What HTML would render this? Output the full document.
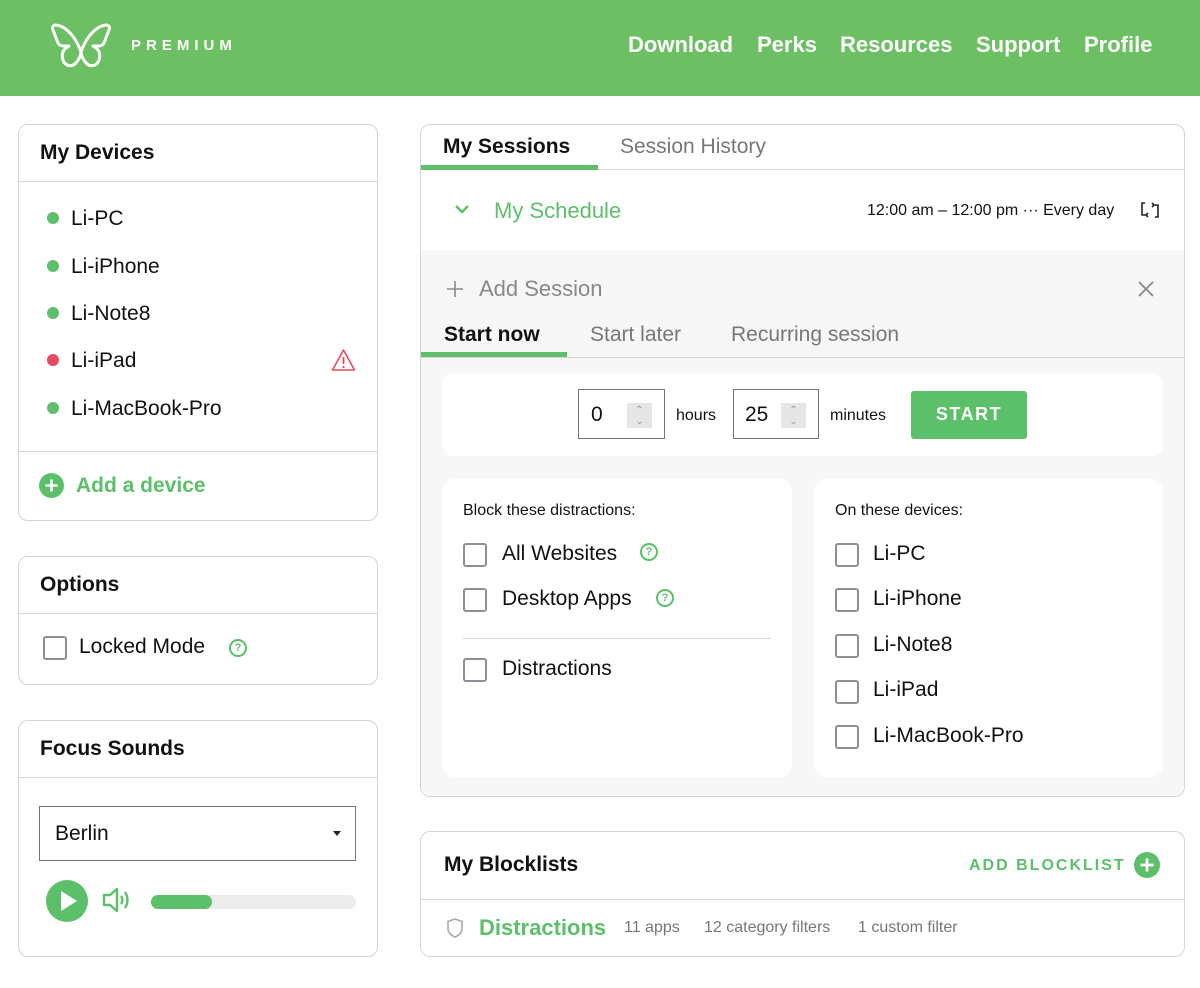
<!DOCTYPE html>
<html><head><meta charset="utf-8"><style>
*{box-sizing:border-box;margin:0;padding:0}
body{width:1200px;height:988px;background:#fff;font-family:"Liberation Sans",Arial,sans-serif;position:relative;overflow:hidden;color:#111}
.a{position:absolute}
.hdr{left:0;top:0;width:1200px;height:96px;background:#6cc063}
.nav{top:32px;color:#fff;font-weight:bold;font-size:22px}
.card{border:1px solid #d4d4d4;border-radius:10px;background:#fff}
.title{font-weight:bold;font-size:21px}
.line{height:1px;background:#d6d6d6}
.dot{width:12px;height:12px;border-radius:50%;background:#5cbf69}
.dev{font-size:21px}
.cb{width:24px;height:24px;border:2px solid #8e8e96;border-radius:3px;background:#fff}
.q{width:18px;height:18px;border:2px solid #5cbf69;border-radius:50%;color:#5cbf69;font-size:11px;font-weight:bold;text-align:center;line-height:14px}
.g{color:#5cbf69}
.gr{color:#777}
</style></head><body>
<div class="a hdr"></div>
<svg class="a" style="left:51px;top:22px" width="60" height="48" viewBox="0 0 60 48"><path d="M30 30 C25 15 15 4 5 3 C2 3 1 5 2 8 L7 21 C8 23 10 24 13 24 L18 24 C12 27 10 32 12 38 C14 44 20 45 24 42 C28 38 30 33 30 30 C30 33 32 38 36 42 C40 45 46 44 48 38 C50 32 48 27 42 24 L47 24 C50 24 52 23 53 21 L58 8 C59 5 58 3 55 3 C45 4 35 15 30 30 Z" fill="none" stroke="#fff" stroke-width="3" stroke-linejoin="round"/></svg>
<div class="a" style="left:131px;top:37px;color:#fff;font-weight:bold;font-size:15px;letter-spacing:5px">PREMIUM</div>
<div class="a nav" style="left:628px">Download</div>
<div class="a nav" style="left:757px">Perks</div>
<div class="a nav" style="left:840px">Resources</div>
<div class="a nav" style="left:976px">Support</div>
<div class="a nav" style="left:1084px">Profile</div>

<!-- Devices -->
<div class="a card" style="left:18px;top:124px;width:360px;height:397px"></div>
<div class="a title" style="left:40px;top:141px">My Devices</div>
<div class="a line" style="left:19px;top:181px;width:358px"></div>
<div class="a dot" style="left:47px;top:212px"></div><div class="a dev" style="left:71px;top:207px">Li-PC</div>
<div class="a dot" style="left:47px;top:260px"></div><div class="a dev" style="left:71px;top:255px">Li-iPhone</div>
<div class="a dot" style="left:47px;top:307px"></div><div class="a dev" style="left:71px;top:302px">Li-Note8</div>
<div class="a dot" style="left:47px;top:354px;background:#e84a5f"></div><div class="a dev" style="left:71px;top:349px">Li-iPad</div>
<svg class="a" style="left:331px;top:348px" width="25" height="24" viewBox="0 0 25 24"><path d="M12.5 2 L23.5 22 H1.5 Z" fill="none" stroke="#e84a5f" stroke-width="1.6" stroke-linejoin="round"/><path d="M12.5 9 V16" stroke="#e84a5f" stroke-width="1.8"/><circle cx="12.5" cy="19" r="1.1" fill="#e84a5f"/></svg>
<div class="a dot" style="left:47px;top:402px"></div><div class="a dev" style="left:71px;top:397px">Li-MacBook-Pro</div>
<div class="a line" style="left:19px;top:451px;width:358px"></div>
<svg class="a" style="left:39px;top:473px" width="25" height="25"><circle cx="12.5" cy="12.5" r="12.5" fill="#5cbf69"/><path d="M12.5 6.5V18.5M6.5 12.5H18.5" stroke="#fff" stroke-width="2.6"/></svg>
<div class="a g" style="left:76px;top:474px;font-size:21px;font-weight:bold">Add a device</div>

<!-- Options -->
<div class="a card" style="left:18px;top:556px;width:360px;height:129px"></div>
<div class="a title" style="left:40px;top:573px">Options</div>
<div class="a line" style="left:19px;top:613px;width:358px"></div>
<div class="a cb" style="left:43px;top:636px"></div>
<div class="a dev" style="left:79px;top:635px">Locked Mode</div>
<div class="a q" style="left:229px;top:639px">?</div>

<!-- Focus Sounds -->
<div class="a card" style="left:18px;top:720px;width:360px;height:237px"></div>
<div class="a title" style="left:40px;top:737px">Focus Sounds</div>
<div class="a line" style="left:19px;top:777px;width:358px"></div>
<div class="a" style="left:39px;top:806px;width:317px;height:55px;border:1.5px solid #777"></div>
<div class="a dev" style="left:55px;top:822px">Berlin</div>
<div class="a" style="left:333px;top:831px;border-left:4px solid transparent;border-right:4px solid transparent;border-top:5px solid #222"></div>
<svg class="a" style="left:46px;top:880px" width="42" height="42"><circle cx="21" cy="21" r="21" fill="#5cbf69"/><path d="M15 11 L31 21 L15 31 Z" fill="#fff"/></svg>
<svg class="a" style="left:102px;top:887px" width="30" height="26" viewBox="0 0 30 26"><path d="M2 8 H8 L15 2 V24 L8 18 H2 Z" fill="none" stroke="#5cbf69" stroke-width="2.4" stroke-linejoin="round"/><path d="M19 9 Q22 13 19 17" fill="none" stroke="#5cbf69" stroke-width="2.4"/><path d="M23 5 Q28 13 23 21" fill="none" stroke="#5cbf69" stroke-width="2.4"/></svg>
<div class="a" style="left:151px;top:895px;width:205px;height:14px;border-radius:7px;background:#ececec"></div>
<div class="a" style="left:151px;top:895px;width:61px;height:14px;border-radius:7px;background:#5cbf69"></div>

<!-- Sessions -->
<div class="a card" style="left:420px;top:124px;width:765px;height:673px;overflow:hidden"><div class="a" style="left:0;top:125px;width:765px;height:548px;background:#f7f7f7"></div></div>
<div class="a title" style="left:443px;top:135px">My Sessions</div>
<div class="a" style="left:620px;top:135px;font-size:21px;color:#777">Session History</div>
<div class="a line" style="left:421px;top:169px;width:763px"></div>
<div class="a" style="left:421px;top:165px;width:177px;height:5px;background:#5cbf69"></div>
<svg class="a" style="left:454px;top:203px" width="16" height="12"><path d="M2 3 L8 9 L14 3" fill="none" stroke="#5cbf69" stroke-width="2.4"/></svg>
<div class="a g" style="left:494px;top:198px;font-size:22px">My Schedule</div>
<div class="a" style="left:867px;top:202px;font-size:16px">12:00 am – 12:00 pm ··· Every day</div>
<svg class="a" style="left:1140px;top:201px" width="20" height="18" viewBox="0 0 20 18"><path d="M5 2 H2 V14 H7 M8 12 L6 14 L8 16" fill="none" stroke="#222" stroke-width="1.6"/><path d="M15 16 H18 V4 H13 M12 2 L14 4 L12 6" fill="none" stroke="#222" stroke-width="1.6"/></svg>
<svg class="a" style="left:446px;top:280px" width="18" height="18"><path d="M9 1V17M1 9H17" stroke="#888" stroke-width="1.6"/></svg>
<div class="a" style="left:479px;top:276px;font-size:22px;color:#888">Add Session</div>
<svg class="a" style="left:1137px;top:280px" width="18" height="18"><path d="M2 2L16 16M16 2L2 16" stroke="#888" stroke-width="1.8"/></svg>
<div class="a title" style="left:444px;top:323px">Start now</div>
<div class="a" style="left:590px;top:323px;font-size:21px;color:#777">Start later</div>
<div class="a" style="left:731px;top:323px;font-size:21px;color:#777">Recurring session</div>
<div class="a line" style="left:421px;top:357px;width:763px"></div>
<div class="a" style="left:421px;top:352px;width:146px;height:5px;background:#5cbf69"></div>

<div class="a" style="left:442px;top:373px;width:721px;height:83px;background:#fff;border-radius:12px"></div>
<div class="a" style="left:578px;top:389px;width:87px;height:50px;border:1.5px solid #777"></div>
<div class="a dev" style="left:591px;top:403px">0</div>
<div class="a" style="left:627px;top:403px;width:25px;height:25px;background:#e6e6e6;color:#999;font-size:10px;line-height:11px;text-align:center;padding-top:2px">⌃<br>⌄</div>
<div class="a" style="left:676px;top:407px;font-size:16px">hours</div>
<div class="a" style="left:733px;top:389px;width:86px;height:50px;border:1.5px solid #777"></div>
<div class="a dev" style="left:745px;top:403px">25</div>
<div class="a" style="left:781px;top:403px;width:25px;height:25px;background:#e6e6e6;color:#999;font-size:10px;line-height:11px;text-align:center;padding-top:2px">⌃<br>⌄</div>
<div class="a" style="left:830px;top:407px;font-size:16px">minutes</div>
<div class="a" style="left:911px;top:391px;width:116px;height:48px;background:#5cbf69;border-radius:3px;color:#fff;font-weight:bold;font-size:18px;letter-spacing:1.5px;text-align:center;line-height:46px">START</div>

<div class="a" style="left:442px;top:479px;width:350px;height:298px;background:#fff;border-radius:12px"></div>
<div class="a" style="left:814px;top:479px;width:349px;height:298px;background:#fff;border-radius:12px"></div>
<div class="a" style="left:463px;top:502px;font-size:16px">Block these distractions:</div>
<div class="a cb" style="left:463px;top:543px"></div><div class="a dev" style="left:502px;top:542px">All Websites</div><div class="a q" style="left:640px;top:543px">?</div>
<div class="a cb" style="left:463px;top:588px"></div><div class="a dev" style="left:502px;top:587px">Desktop Apps</div><div class="a q" style="left:656px;top:589px">?</div>
<div class="a line" style="left:463px;top:638px;width:308px"></div>
<div class="a cb" style="left:463px;top:658px"></div><div class="a dev" style="left:502px;top:657px">Distractions</div>
<div class="a" style="left:835px;top:502px;font-size:16px">On these devices:</div>
<div class="a cb" style="left:835px;top:543px"></div><div class="a dev" style="left:873px;top:542px">Li-PC</div>
<div class="a cb" style="left:835px;top:588px"></div><div class="a dev" style="left:873px;top:587px">Li-iPhone</div>
<div class="a cb" style="left:835px;top:634px"></div><div class="a dev" style="left:873px;top:633px">Li-Note8</div>
<div class="a cb" style="left:835px;top:680px"></div><div class="a dev" style="left:873px;top:678px">Li-iPad</div>
<div class="a cb" style="left:835px;top:725px"></div><div class="a dev" style="left:873px;top:724px">Li-MacBook-Pro</div>

<!-- Blocklists -->
<div class="a card" style="left:420px;top:831px;width:765px;height:126px"></div>
<div class="a title" style="left:444px;top:853px">My Blocklists</div>
<div class="a g" style="left:969px;top:857px;font-size:16px;font-weight:bold;letter-spacing:2px">ADD BLOCKLIST</div>
<svg class="a" style="left:1134px;top:852px" width="26" height="26"><circle cx="13" cy="13" r="13" fill="#5cbf69"/><path d="M13 6.5V19.5M6.5 13H19.5" stroke="#fff" stroke-width="2.8"/></svg>
<div class="a line" style="left:421px;top:899px;width:763px"></div>
<svg class="a" style="left:446px;top:917px" width="18" height="22" viewBox="0 0 18 22"><path d="M9 2 L16 4.5 V12 C16 16 12 19 9 20 C6 19 2 16 2 12 V4.5 Z" fill="none" stroke="#aaa" stroke-width="1.6"/></svg>
<div class="a g" style="left:479px;top:915px;font-size:22px;font-weight:bold">Distractions</div>
<div class="a gr" style="left:624px;top:919px;font-size:16px">11 apps</div>
<div class="a gr" style="left:704px;top:919px;font-size:16px">12 category filters</div>
<div class="a gr" style="left:858px;top:919px;font-size:16px">1 custom filter</div>
</body></html>
